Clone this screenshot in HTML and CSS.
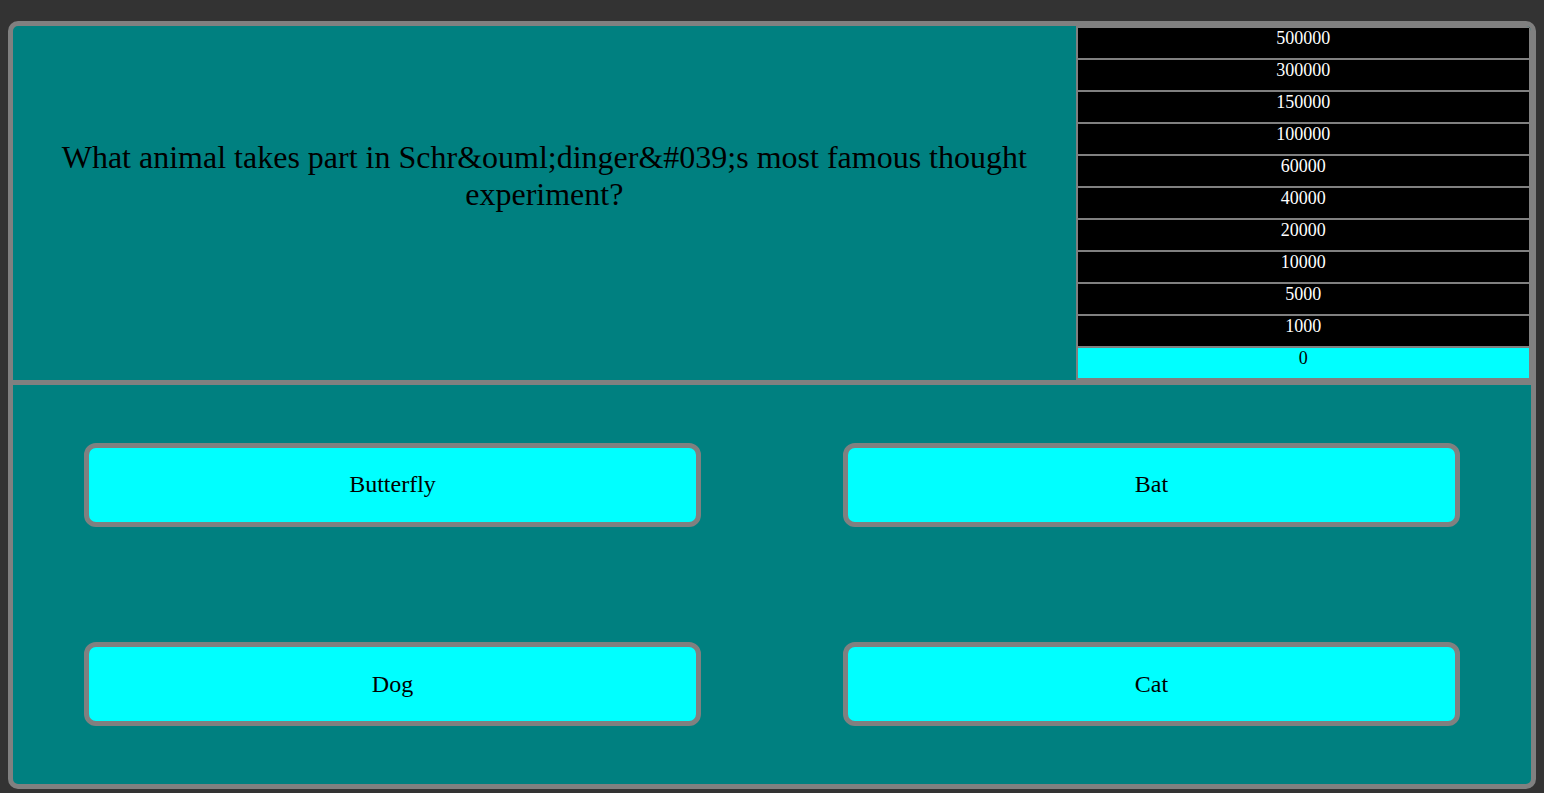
FILE: index.html
```html
<!DOCTYPE html>
<html>
<head>
<meta charset="utf-8">
<link rel="stylesheet" href="styles.css">
</head>
<body>
<div class="game">
  <div class="top">
    <div class="question">
      <p class="question-text">What animal takes part in Schr&amp;ouml;dinger&amp;#039;s most famous thought experiment?</p>
    </div>
    <div class="ladder">
      <div class="step">500000</div>
      <div class="step">300000</div>
      <div class="step">150000</div>
      <div class="step">100000</div>
      <div class="step">60000</div>
      <div class="step">40000</div>
      <div class="step">20000</div>
      <div class="step">10000</div>
      <div class="step">5000</div>
      <div class="step">1000</div>
      <div class="step current">0</div>
    </div>
  </div>
  <div class="answers">
    <div class="cell"><div class="answer">Butterfly</div></div>
    <div class="cell"><div class="answer">Bat</div></div>
    <div class="cell"><div class="answer">Dog</div></div>
    <div class="cell"><div class="answer">Cat</div></div>
  </div>
</div>
</body>
</html>
```

FILE: styles.css
```css
html, body {
  background: #333333;
}
body {
  margin: 8px;
  font-family: "Liberation Serif", "Times New Roman", serif;
  color: #000;
}
.game {
  margin-top: 13px;
  border: 5px solid #808080;
  border-radius: 10px;
  background: #008080;
  overflow: hidden;
}
.top {
  display: flex;
  height: 354px;
  border-bottom: 5px solid #808080;
  box-sizing: content-box;
}
.question {
  width: 70%;
  box-sizing: border-box;
  padding: 113px 40px 0;
}
.question-text {
  margin: 0;
  font-size: 32px;
  text-align: center;
}
.ladder {
  width: 30%;
  box-sizing: border-box;
  border: 1px solid #808080;
  display: flex;
  flex-direction: column;
}
.step {
  height: 30px;
  border: 1px solid #808080;
  background: #000;
  color: #fff;
  font-size: 18px;
  line-height: 21px;
  text-align: center;
}
.step.current {
  background: #00ffff;
  color: #000;
}
.answers {
  height: 399px;
  display: grid;
  grid-template-columns: 1fr 1fr;
  grid-template-rows: 1fr 1fr;
}
.cell {
  display: flex;
  align-items: center;
  justify-content: center;
}
.answer {
  width: 80%;
  height: 74px;
  border: 5px solid #808080;
  border-radius: 12px;
  background: #00ffff;
  font-size: 24px;
  display: flex;
  align-items: center;
  justify-content: center;
}
```
